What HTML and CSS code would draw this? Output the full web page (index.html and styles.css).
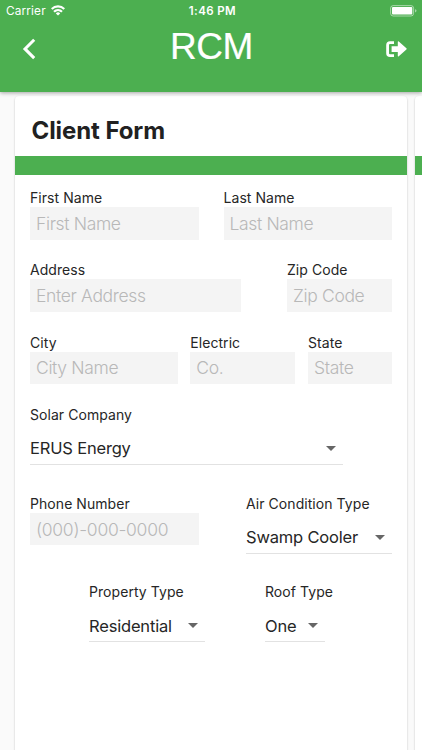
FILE: index.html
```html
<!DOCTYPE html>
<html lang="en">
<head>
<meta charset="utf-8">
<title>RCM</title>
<link rel="stylesheet" href="styles.css">
</head>
<body>
<header class="app-bar">
  <div class="status">
    <div class="carrier"><span>Carrier</span>
      <svg class="wifi" width="14" height="11" viewBox="0 0 14 11" fill="none" stroke="#fff" stroke-width="2.2"><path d="M.7 4a9 9 0 0 1 12.6 0M3 6.7a5.8 5.8 0 0 1 8 0"/><path d="M7 10.6 4.8 8.5a3 3 0 0 1 4.4 0z" fill="#fff" stroke="none"/></svg>
    </div>
    <time>1:46 PM</time>
    <svg class="battery" width="27" height="12" viewBox="0 0 27 12"><rect x=".6" y=".6" width="23" height="10.4" rx="2.6" fill="none" stroke="#fff" stroke-opacity=".5"/><rect x="2" y="2" width="20.3" height="7.6" rx="1" fill="#fff"/><path d="M25 4.2q1.5.4 1.5 1.6T25 7.4z" fill="#fff" fill-opacity=".5"/></svg>
  </div>
  <div class="toolbar">
    <svg class="back" width="14" height="22" viewBox="0 0 14 22" fill="none" stroke="#fff" stroke-width="3"><path d="M12.2 1.7 3 10.9l9.2 9.2"/></svg>
    <h1>RCM</h1>
    <svg class="logout" width="21" height="16" viewBox="0 0 21 16"><path d="M8 1.6H4Q1.6 1.6 1.6 4v8.2q0 2.4 2.4 2.4H8" fill="none" stroke="#fff" stroke-width="2.8"/><path d="M5.6 5.2h6.2V.9q0-1.2 1-.5l7.6 6.8q.6.6 0 1.2l-7.6 6.8q-1 .7-1-.5v-3.7H5.6z" fill="#fff"/></svg>
  </div>
</header>
<main class="pager">
  <section class="card">
    <h2>Client Form</h2>
    <div class="band"></div>
    <form class="form">
      <div class="row">
        <label class="field w169"><span>First Name</span><input placeholder="First Name"></label>
        <label class="field w169"><span>Last Name</span><input placeholder="Last Name"></label>
      </div>
      <div class="row">
        <label class="field w211"><span>Address</span><input placeholder="Enter Address"></label>
        <label class="field w105"><span>Zip Code</span><input placeholder="Zip Code"></label>
      </div>
      <div class="row">
        <label class="field w148"><span>City</span><input placeholder="City Name"></label>
        <label class="field w105"><span>Electric</span><input placeholder="Co."></label>
        <label class="field w84"><span>State</span><input placeholder="State"></label>
      </div>
      <div class="row tall">
        <div class="field w313"><span>Solar Company</span><div class="select"><b>ERUS Energy</b><i></i></div></div>
      </div>
      <div class="row tall">
        <label class="field w169"><span>Phone Number</span><input class="phone" placeholder="(000)-000-0000"></label>
        <div class="field w146"><span>Air Condition Type</span><div class="select"><b>Swamp Cooler</b><i></i></div></div>
      </div>
      <div class="row types">
        <div class="field w116"><span>Property Type</span><div class="select"><b>Residential</b><i></i></div></div>
        <div class="field w60"><span>Roof Type</span><div class="select"><b>One</b><i></i></div></div>
      </div>
    </form>
  </section>
  <section class="card next"><div class="band"></div></section>
</main>
</body>
</html>
```
FILE: styles.css
```css
* { box-sizing: border-box; }
body {
  margin: 0;
  height: 750px;
  overflow: hidden;
  background: #fafafa;
  color: #262626;
  font-family: Inter, "Liberation Sans", sans-serif;
  display: flex;
  flex-direction: column;
}
.app-bar {
  flex: none;
  height: 92px;
  background: #4caf50;
  color: #fff;
  box-shadow: 0 1px 4px rgba(0, 0, 0, .35);
  position: relative;
}
.status {
  height: 22px;
  padding: 0 6px;
  display: grid;
  grid-template-columns: 1fr auto 1fr;
  align-items: center;
  font-size: 11.8px;
  line-height: 22px;
}
.carrier { display: flex; align-items: center; gap: 5px; letter-spacing: .15px; }
.wifi { margin-top: -1px; }
.status time { font-weight: 600; font-size: 11.5px; letter-spacing: .4px; margin-left: 3px; }
.battery { justify-self: end; margin: -1px -1px 0 0; }
.toolbar {
  height: 54px;
  padding: 0 15px 0 22px;
  display: grid;
  grid-template-columns: 1fr auto 1fr;
  align-items: center;
}
.toolbar h1 {
  margin: -5px 0 0 -6px;
  font: 400 37px/50px "Liberation Sans", sans-serif;
  letter-spacing: -.4px;
  -webkit-text-stroke: .2px #fff;
}
.logout { justify-self: end; }
.pager {
  flex: 1;
  min-height: 0;
  display: grid;
  grid-template-columns: 392px minmax(0, 1fr);
  gap: 8px;
  padding: 4px 0 0 15px;
  overflow: hidden;
}
.card {
  height: 670px;
  background: #fff;
  border-radius: 4px;
  box-shadow: 0 1px 2px rgba(0, 0, 0, .26);
}
.card h2 {
  margin: 0;
  height: 60px;
  padding: 4px 0 0 16.5px;
  font-size: 24px;
  line-height: 61px;
  font-weight: 700;
  letter-spacing: -.08px;
  color: #212121;
}
.next { padding-top: 60px; border-radius: 4px 0 0 4px; }
.band { height: 19px; background: #4caf50; }
.form { padding: 14px 15px 0; }
.row { display: flex; justify-content: space-between; height: 72.3px; }
.row.tall { height: 88.7px; }
.row.types { justify-content: flex-start; gap: 60px; padding-left: 59px; }
.field { display: block; font-size: 14px; line-height: 18px; letter-spacing: .06px; }
.field > span { display: block; white-space: nowrap; }
.field input {
  display: block;
  width: 100%;
  height: 32.5px;
  border: 0;
  border-radius: 0;
  padding: 0 6px;
  background: #f4f4f4;
  font: 300 17.5px Inter, sans-serif;
  letter-spacing: -.35px;
}
.field input::placeholder { color: #b8b8b8; opacity: 1; }
.field .phone { padding-top: 1px; letter-spacing: -.28px; }
.select {
  display: flex;
  justify-content: space-between;
  align-items: center;
  height: 41px;
  padding: 9px 7px 0 0;
  border-bottom: 1px solid #e2e2e2;
}
.select b { font-size: 16.5px; font-weight: 400; white-space: nowrap; letter-spacing: -.18px; }
.select i { border: 5px solid transparent; border-top-color: #666; border-bottom: 0; }
.w169 { width: 168.5px; }
.w211 { width: 211px; }
.w105 { width: 105px; }
.w148 { width: 147.5px; }
.w84 { width: 84px; }
.w313 { width: 313px; }
.w146 { width: 146px; }
.w116 { width: 116px; }
.w60 { width: 60px; }
```
